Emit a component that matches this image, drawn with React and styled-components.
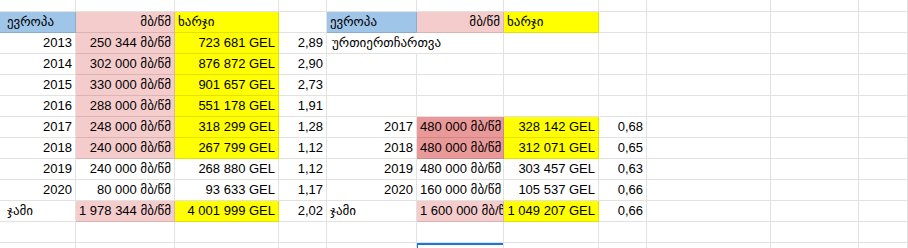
import React from "react";
import styled, { createGlobalStyle } from "styled-components";

const BLUE = "#9fc5e8";
const PINK = "#f4cccc";
const RED = "#ea9999";
const YELLOW = "#ffff00";
const UNIT = "მბ/წმ";

const GlobalStyle = createGlobalStyle`
  html, body {
    margin: 0;
    background: #ffffff;
    overflow: hidden;
  }
  body {
    font-family: "Liberation Sans", Arial, "DejaVu Sans", sans-serif;
    color: #000000;
  }
`;

const Sheet = styled.div`
  display: grid;
  grid-template-columns: 76px 99px 104px 48px 90px 87px 95px 48px 124px 88px 1fr;
  grid-template-rows: 12px repeat(11, 21px) 30px;
  width: 100vw;
  height: 248px;
  overflow: hidden;
`;

const Cell = styled.div`
  position: relative;
  box-sizing: border-box;
  grid-column: span ${(p) => p.$span || 1};
  border-right: 1px solid rgba(0, 0, 0, 0.115);
  border-bottom: 1px solid rgba(0, 0, 0, 0.115);
  background: ${(p) => p.$bg || "transparent"};
  padding: 0 3px 0 ${(p) => (p.$first && p.$left ? "7px" : p.$pad || "3px")};
  font-size: 13px;
  line-height: 20px;
  white-space: nowrap;
  overflow: ${(p) => (p.$span ? "visible" : "hidden")};
  text-align: ${(p) => (p.$left ? "left" : "right")};
  text-overflow: clip;

  ${(p) =>
    p.$selected &&
    `
    &::after {
      content: "";
      position: absolute;
      top: 0;
      left: -1px;
      right: -2px;
      height: 20px;
      border: 2px solid #1a73e8;
      box-sizing: border-box;
    }
  `}
`;

const empty = (n) => Array.from({ length: n }, () => ({}));

const block = (year, amount, cost, ratio, amountBg, costBg) => [
  { v: year },
  { v: `${amount} ${UNIT}`, bg: amountBg },
  { v: `${cost} GEL`, bg: costBg },
  { v: ratio },
];

const header = [
  { v: "ევროპა", bg: BLUE, left: true },
  { v: UNIT, bg: PINK },
  { v: "ხარჯი", bg: YELLOW, left: true },
  {},
];

const rows = [
  empty(11),
  [...header, ...header, ...empty(3)],
  [
    ...block("2013", "250 344", "723 681", "2,89", PINK, YELLOW),
    { v: "ურთიერთჩართვა", left: true, span: 2, pad: "5px" },
    ...empty(5),
  ],
  [...block("2014", "302 000", "876 872", "2,90", PINK, YELLOW), ...empty(7)],
  [...block("2015", "330 000", "901 657", "2,73", PINK, YELLOW), ...empty(7)],
  [...block("2016", "288 000", "551 178", "1,91", PINK, YELLOW), ...empty(7)],
  [
    ...block("2017", "248 000", "318 299", "1,28", PINK, YELLOW),
    ...block("2017", "480 000", "328 142", "0,68", RED, YELLOW),
    ...empty(3),
  ],
  [
    ...block("2018", "240 000", "267 799", "1,12", PINK, YELLOW),
    ...block("2018", "480 000", "312 071", "0,65", RED, YELLOW),
    ...empty(3),
  ],
  [
    ...block("2019", "240 000", "268 880", "1,12"),
    ...block("2019", "480 000", "303 457", "0,63"),
    ...empty(3),
  ],
  [
    ...block("2020", "80 000", "93 633", "1,17"),
    ...block("2020", "160 000", "105 537", "0,66"),
    ...empty(3),
  ],
  [
    { v: "ჯამი", left: true },
    { v: `1 978 344 ${UNIT}`, bg: PINK },
    { v: "4 001 999 GEL", bg: YELLOW },
    { v: "2,02" },
    { v: "ჯამი", left: true },
    { v: `1 600 000 ${UNIT}`, bg: PINK, left: true },
    { v: "1 049 207 GEL", bg: YELLOW },
    { v: "0,66" },
    ...empty(3),
  ],
  empty(11),
  [...empty(5), { selected: true }, ...empty(5)],
];

export default function App() {
  return (
    <>
      <GlobalStyle />
      <Sheet>
        {rows.map((row, r) =>
          row.map((c, i) => (
            <Cell
              key={`${r}-${i}`}
              $first={i === 0}
              $bg={c.bg}
              $left={c.left}
              $pad={c.pad}
              $span={c.span}
              $selected={c.selected}
            >
              {c.v}
            </Cell>
          ))
        )}
      </Sheet>
    </>
  );
}
